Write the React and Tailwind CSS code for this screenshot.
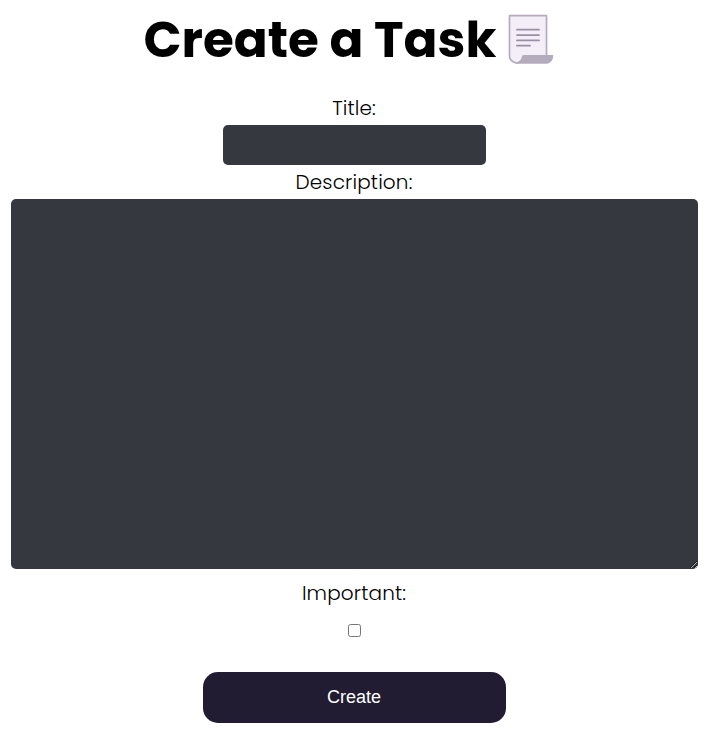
function Scroll() {
  return (
    <svg className="h-[50px] w-[46px] shrink-0" viewBox="0 0 46 50" fill="none">
      <path d="M1.5 1.7H38.5V42H15Q13.5 49 8 49Q1.5 47 1.5 42Z" fill="#f3eef8" stroke="#b4acbc" strokeWidth="1.7" strokeLinejoin="round" />
      <path d="M7.5 49C12.5 49 14 46 14.5 43.5Q15 41 17 41H45.2V42C45.2 46.5 42 49.8 37.5 49.8H8Z" fill="#b4acbc" />
      <path d="M9 15.7H31M9 21.1H31M9 26.4H31M9 31.7H22" stroke="#998ea4" strokeWidth="1.8" strokeLinecap="round" />
    </svg>
  );
}

const label =
  "block whitespace-nowrap text-center font-[Poppins,Inter,sans-serif] text-[20px] font-light leading-[30px] tracking-[0.15px] text-black";

export default function App() {
  return (
    <main className="flex h-[740px] w-[708px] flex-col items-center bg-white">
      <h1 className="flex h-[93px] w-full items-start pl-[143.5px] pt-[14px] font-[Poppins,Inter,sans-serif] text-[50px] font-bold leading-[52px] text-black">
        <span className="w-[364.5px] whitespace-nowrap">Create a Task</span>
        <Scroll />
      </h1>
      <label htmlFor="title" className={`${label} h-8`}>Title:</label>
      <input id="title" className="h-10 w-[263px] rounded-[5px] bg-[#363840] px-3 text-white outline-none" />
      <label htmlFor="description" className={`${label} mt-[2px] h-8`}>Description:</label>
      <textarea id="description" className="block h-[370px] w-[687px] shrink-0 resize rounded-[5px] bg-[#363840] p-3 text-white outline-none" />
      <label htmlFor="important" className={`${label} mt-[9px]`}>Important:</label>
      <input id="important" type="checkbox" className="mt-[15.5px] h-[13px] w-[13px]" />
      <button className="mt-[35.5px] h-[51px] w-[303px] rounded-[15px] bg-[#221c32] pb-[2px] font-['Liberation_Sans',Arial,sans-serif] text-[18px] leading-5 text-white">
        Create
      </button>
    </main>
  );
}
